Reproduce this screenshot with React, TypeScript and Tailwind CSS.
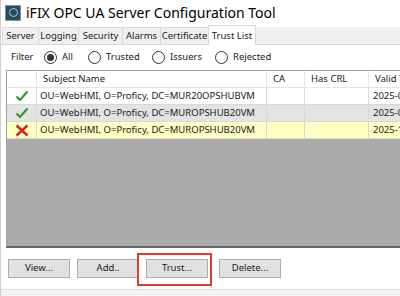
import React from "react";

const tabs = [
  { label: "Server", w: "w-[36px]" },
  { label: "Logging", w: "w-[40px]" },
  { label: "Security", w: "w-[44px]" },
  { label: "Alarms", w: "w-[38px]" },
  { label: "Certificate", w: "w-[48px]" },
];

const rows = [
  { ok: true, name: "OU=WebHMI, O=Proficy, DC=MUR20OPSHUBVM", valid: "2025-09-14", bg: "bg-white" },
  { ok: true, name: "OU=WebHMI, O=Proficy, DC=MUROPSHUB20VM", valid: "2025-09-21", bg: "bg-[#e3e3e3]" },
  { ok: false, name: "OU=WebHMI, O=Proficy, DC=MUROPSHUB20VM", valid: "2025-10-02", bg: "bg-[#ffffc4]" },
];

function Check() {
  return (
    <svg width="14" height="12" viewBox="0 0 14 12">
      <path d="M1.5 6.5 L5 10 L12.5 1.5" fill="none" stroke="#2f9a2f" strokeWidth="2.2" />
    </svg>
  );
}

function Cross() {
  return (
    <svg width="14" height="13" viewBox="0 0 14 13">
      <path d="M1.5 1.5 L12.5 11.5 M12.5 1.5 L1.5 11.5" fill="none" stroke="#d62020" strokeWidth="2.4" />
    </svg>
  );
}

function Radio({ label, on, w }: { label: string; on?: boolean; w: string }) {
  return (
    <div className={`flex items-center gap-[5px] shrink-0 ${w}`}>
      <div className="w-[13px] h-[13px] rounded-full border border-[#333] flex items-center justify-center bg-white">
        {on && <div className="w-[7px] h-[7px] rounded-full bg-[#333]" />}
      </div>
      <span>{label}</span>
    </div>
  );
}

function Btn({ label }: { label: string }) {
  return (
    <div className="w-[62px] h-[19px] bg-[#e1e1e1] border border-[#adadad] flex items-center justify-center">
      {label}
    </div>
  );
}

export default function App() {
  return (
    <div
      className="w-[400px] h-[296px] bg-white border-l border-[#cfcfcf] overflow-hidden flex flex-col text-[9.5px] text-[#1a1a1a]"
      style={{ fontFamily: '"Noto Sans", "Open Sans", sans-serif' }}
    >
      {/* title bar */}
      <div className="h-[25px] shrink-0 flex items-center pl-[4px] gap-[5px]">
        <div className="w-[16px] h-[16px] bg-[#2c4a5c] border border-[#7a98a8] flex items-center justify-center">
          <div className="w-[9px] h-[9px] rounded-full border border-[#a9c3cf]" />
        </div>
        <span className="text-[14px] text-black">iFIX OPC UA Server Configuration Tool</span>
      </div>

      {/* tabs */}
      <div className="h-[20px] shrink-0 flex items-end bg-white pl-[1px] border-b border-[#d9d9d9]">
        <div className="flex items-end h-full w-full">
          {tabs.map((t) => (
            <div
              key={t.label}
              className={`${t.w} h-[17px] shrink-0 flex items-center justify-center bg-[#f0f0f0] border-t border-l border-[#d9d9d9] leading-none whitespace-nowrap`}
            >
              {t.label}
            </div>
          ))}
          <div className="w-[48px] h-[20px] shrink-0 flex items-center justify-center bg-white border-t border-l border-r border-[#d9d9d9] -mb-px leading-none whitespace-nowrap">
            Trust List
          </div>
          <div className="h-[17px] flex-1 bg-[#f0f0f0]" />
        </div>
      </div>

      {/* filter row */}
      <div className="h-[24px] shrink-0 flex items-center pl-[10px]">
        <span className="w-[33px] shrink-0">Filter</span>
        <Radio label="All" on w="w-[44px]" />
        <Radio label="Trusted" w="w-[64px]" />
        <Radio label="Issuers" w="w-[63px]" />
        <Radio label="Rejected" w="w-[70px]" />
      </div>

      {/* table */}
      <div className="ml-[5px] mt-[1px] h-[178px] shrink-0 border-l border-t border-[#a0a0a0] border-b-2 border-b-[#646464] bg-[#ababab] flex flex-col overflow-hidden">
        <div className="h-[17px] shrink-0 flex bg-white border-b border-[#e5e5e5]">
          <div className="w-[30px] shrink-0 border-r border-[#e5e5e5]" />
          <div className="w-[230px] shrink-0 border-r border-[#e5e5e5] pl-[6px] flex items-center">Subject Name</div>
          <div className="w-[38px] shrink-0 border-r border-[#e5e5e5] pl-[6px] flex items-center">CA</div>
          <div className="w-[64px] shrink-0 border-r border-[#e5e5e5] pl-[6px] flex items-center">Has CRL</div>
          <div className="flex-1 pl-[6px] flex items-center whitespace-nowrap overflow-hidden">Valid To</div>
        </div>
        {rows.map((r, i) => (
          <div key={i} className={`h-[17px] shrink-0 flex border-b border-[#d8d8d8] ${r.bg}`}>
            <div className="w-[30px] shrink-0 border-r border-[#d8d8d8] flex items-center justify-center">
              {r.ok ? <Check /> : <Cross />}
            </div>
            <div className="w-[230px] shrink-0 border-r border-[#d8d8d8] pl-[3px] flex items-center whitespace-nowrap overflow-hidden">
              {r.name}
            </div>
            <div className="w-[38px] shrink-0 border-r border-[#d8d8d8]" />
            <div className="w-[64px] shrink-0 border-r border-[#d8d8d8]" />
            <div className="flex-1 pl-[4px] flex items-center whitespace-nowrap overflow-hidden">{r.valid}</div>
          </div>
        ))}
      </div>

      {/* buttons */}
      <div className="h-[41px] shrink-0 flex items-center pl-[7px] gap-[7px] relative">
        <Btn label="View..." />
        <Btn label="Add.." />
        <div className="w-[60px]">
          <Btn label="Trust..." />
        </div>
        <div className="ml-[6px]">
          <Btn label="Delete..." />
        </div>
        <div className="absolute left-[136px] top-[5px] w-[75px] h-[33px] border-2 border-[#e53935]" />
      </div>

      <div className="flex-1 border-t border-[#dcdcdc] bg-[#f3f3f3]" />
    </div>
  );
}
